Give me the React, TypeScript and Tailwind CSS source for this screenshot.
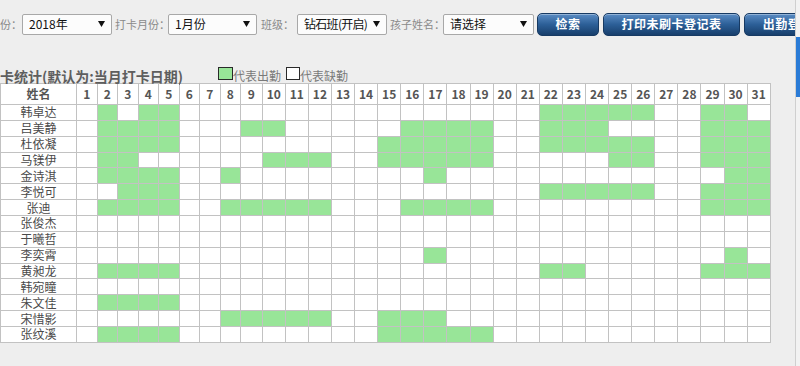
import React from "react";

const rows: [string, number[]][] = [
  ["韩卓达", [2, 4, 5, 22, 23, 24, 25, 26, 29, 30]],
  ["吕美静", [2, 3, 4, 5, 9, 10, 16, 17, 18, 19, 22, 23, 24, 29, 30, 31]],
  ["杜依凝", [2, 3, 4, 5, 15, 16, 17, 18, 19, 22, 23, 24, 25, 26, 29, 30, 31]],
  ["马镁伊", [2, 3, 10, 11, 12, 15, 16, 17, 18, 19, 25, 26, 29, 30, 31]],
  ["金诗淇", [2, 3, 4, 5, 8, 17, 30, 31]],
  ["李悦可", [3, 4, 5, 22, 23, 24, 25, 26, 29, 30, 31]],
  ["张迪", [2, 3, 4, 5, 8, 9, 10, 11, 12, 16, 17, 18, 19, 29, 30, 31]],
  ["张俊杰", []],
  ["于曦哲", []],
  ["李奕霄", [17, 30]],
  ["黄昶龙", [2, 3, 4, 5, 22, 23, 29, 30, 31]],
  ["韩宛瞳", []],
  ["朱文佳", [2, 3, 4, 5]],
  ["宋惜影", [8, 9, 10, 11, 12, 15, 16, 17]],
  ["张纹溪", [2, 3, 4, 5, 15, 16, 17, 18, 19]],
];

const days = Array.from({ length: 31 }, (_, i) => i + 1);

function Arrow() {
  return (
    <svg width="7" height="6" viewBox="0 0 7 6" className="shrink-0">
      <path d="M0 0 H7 L3.5 6 Z" fill="#111" />
    </svg>
  );
}

function FakeSelect({ value, w, tight }: { value: string; w: string; tight?: boolean }) {
  return (
    <div
      className={`${w} h-[21px] shrink-0 flex items-center justify-between pl-[6px] pr-[6px] bg-[#fcfcfc] border border-[#a8a8a8] rounded-[2px] text-[12px] text-[#111]`}
    >
      <span className={tight ? "leading-none tracking-[-0.7px]" : "leading-none"}>{value}</span>
      <Arrow />
    </div>
  );
}

function Label({ text, cls }: { text: string; cls: string }) {
  return (
    <div className={`${cls} shrink-0 text-[11px] leading-none text-[#8a8a8a] whitespace-nowrap`}>
      {text}
    </div>
  );
}

function Btn({ text, cls }: { text: string; cls: string }) {
  return (
    <div
      className={`${cls} h-[23px] shrink-0 flex items-center justify-center rounded-[5px] border border-[#173a63] bg-linear-to-b from-[#5a8cc4] via-[#2c5f97] to-[#183f6c] shadow-[inset_0_1px_0_rgba(255,255,255,0.35)] text-white text-[12px] font-bold tracking-[0.5px] whitespace-nowrap overflow-hidden`}
    >
      {text}
    </div>
  );
}

export default function App() {
  return (
    <div className="relative w-[800px] h-[366px] overflow-hidden bg-[#eeeeee] font-['Noto_Sans_CJK_SC',sans-serif]">
      {/* top filter bar */}
      <div className="flex items-center pt-[13px] h-[35px] whitespace-nowrap">
        <Label text="打卡年份：" cls="ml-[-33px] w-[55px]" />
        <FakeSelect value="2018年" w="w-[90px]" />
        <Label text="打卡月份：" cls="ml-[3px] w-[53px]" />
        <FakeSelect value="1月份" w="w-[89px]" />
        <Label text="班级：" cls="ml-[4px] w-[36px]" />
        <FakeSelect value="钻石班(开启)" w="w-[90px]" tight />
        <Label text="孩子姓名：" cls="ml-[3px] w-[53px]" />
        <FakeSelect value="请选择" w="w-[91px]" />
        <Btn text="检索" cls="ml-[3px] w-[62px]" />
        <Btn text="打印未刷卡登记表" cls="ml-[4px] w-[137px]" />
        <Btn text="出勤登记表" cls="ml-[4px] w-[100px]" />
      </div>

      {/* title + legend */}
      <div className="flex items-start mt-[32px] h-[16px] whitespace-nowrap">
        <div className="ml-[-14px] w-[232px] pt-[2px] text-[14px] leading-[14px] font-bold text-[#5e5e5e]">
          打卡统计(默认为:当月打卡日期)
        </div>
        <div className="flex items-start">
          <div className="w-[15px] h-[13px] border border-[#2a2a2a] bg-[#98e598]" />
          <div className="pt-[3px] text-[12px] leading-[12px] text-[#7a7a7a]">代表出勤</div>
          <div className="ml-[5px] w-[14px] h-[13px] border border-[#2a2a2a] bg-white" />
          <div className="pt-[3px] text-[12px] leading-[12px] text-[#7a7a7a]">代表缺勤</div>
        </div>
      </div>

      {/* attendance grid */}
      <div className="w-fit grid grid-cols-[75px_repeat(8,19.5px)_20.7px_repeat(22,22.1px)] grid-rows-[20px] auto-rows-[14.87px] gap-px bg-[#c2c2c2] border border-[#c2c2c2]">
        <div className="bg-white flex items-center justify-center text-[12px] leading-none font-bold text-[#555]">
          姓名
        </div>
        {days.map((d) => (
          <div
            key={d}
            className="bg-white flex items-center justify-center text-[12px] leading-none font-bold text-[#555]"
          >
            {d}
          </div>
        ))}
        {rows.map(([name, present]) => (
          <React.Fragment key={name}>
            <div className="bg-white flex items-center justify-center text-[12px] leading-none text-[#4a4a4a]">
              {name}
            </div>
            {days.map((d) => (
              <div
                key={d}
                className={present.includes(d) ? "bg-[#98e598]" : "bg-white"}
              />
            ))}
          </React.Fragment>
        ))}
      </div>

      {/* right scrollbar strip */}
      <div className="absolute top-0 right-0 w-[5px] h-full bg-[#f2f2f2] border-l border-[#cfcfcf]">
        <div className="absolute top-[37px] left-0 w-full h-[60px] bg-[#2a7bd6]" />
      </div>
    </div>
  );
}
